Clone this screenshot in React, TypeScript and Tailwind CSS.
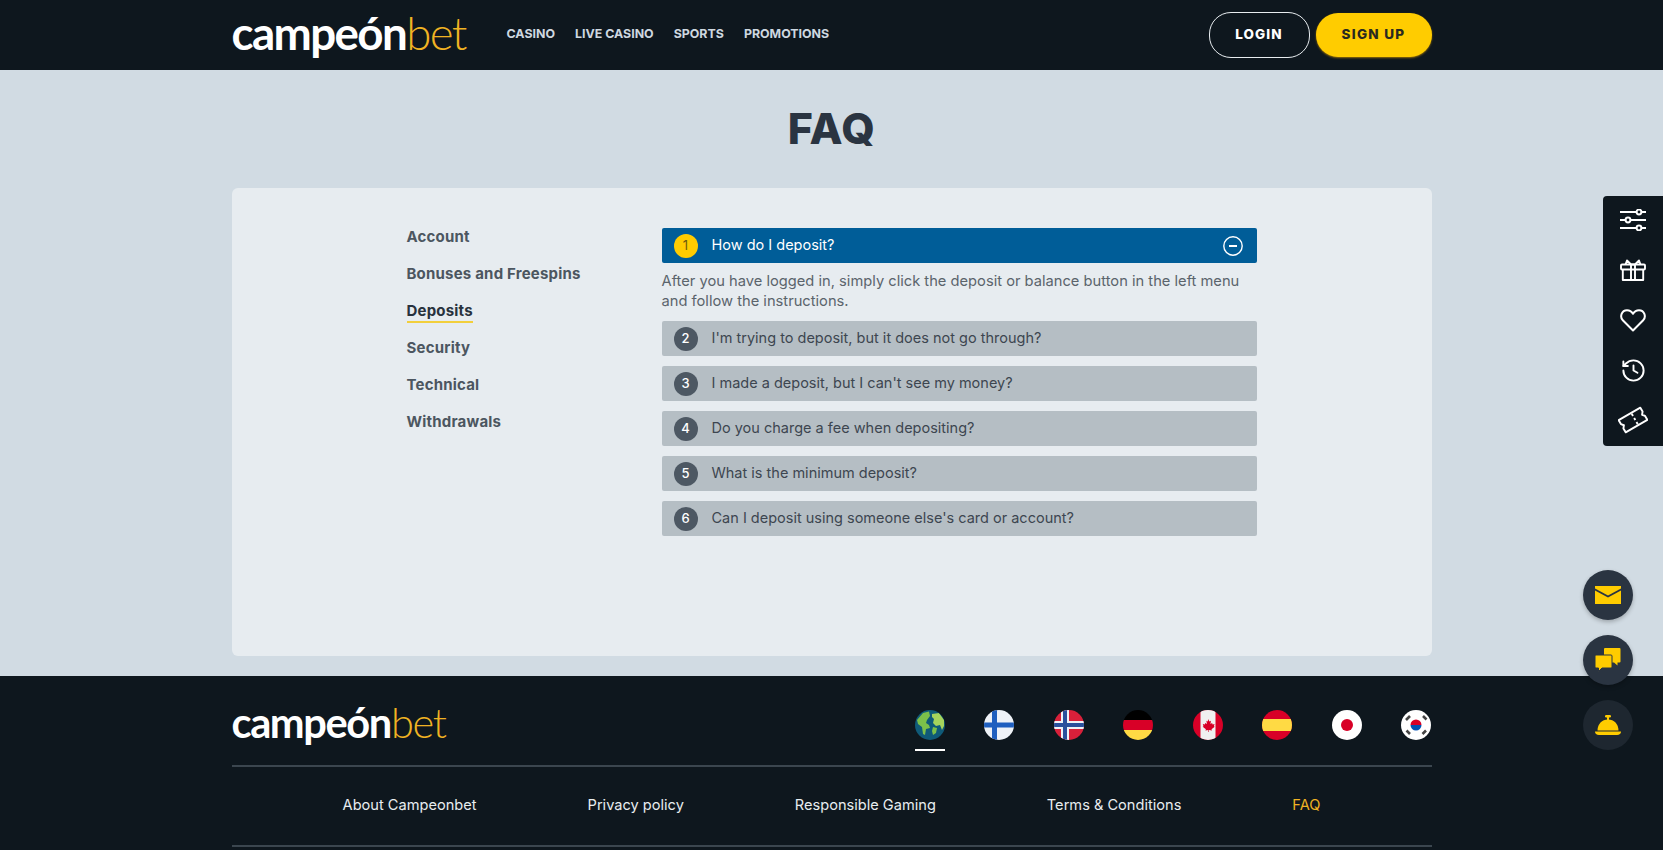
import React from "react";

const font = { fontFamily: '"Inter", "Liberation Sans", sans-serif' };

function Logo({ big }: { big?: boolean }) {
  return (
    <div
      className={
        big
          ? "flex items-baseline text-[45.7px] leading-none tracking-[-1.6px] [font-family:Lato,sans-serif]"
          : "flex items-baseline text-[41.6px] leading-none tracking-[-1.4px] [font-family:Lato,sans-serif]"
      }
    >
      <span className="font-bold text-white">campeón</span>
      <span className="font-light text-[#f0b323]">bet</span>
    </div>
  );
}

const SlidersIcon = () => (
  <svg width="26" height="22" viewBox="0 0 26 22" fill="none" stroke="white" strokeWidth="2">
    <path d="M0 3h16.500M21.500 3H26M0 11h5.500M10.500 11H26M0 19h16.500M21.500 19H26" />
    <circle cx="19" cy="3" r="2.400" />
    <circle cx="8" cy="11" r="2.400" />
    <circle cx="19" cy="19" r="2.400" />
  </svg>
);
const GiftIcon = () => (
  <svg width="26" height="22" viewBox="0 0 26 22" fill="none" stroke="white" strokeWidth="1.9" strokeLinejoin="round">
    <rect x="1" y="5.500" width="24" height="5" rx="1" />
    <path d="M2.800 10.500V21h20.400V10.500M11 5.500V21M15 5.500V21" />
    <path d="M11 5.500 7 1.500l-1.500 4M15 5.500l4-4 1.500 4M11 5.500h4" />
  </svg>
);
const HeartIcon = () => (
  <svg width="26" height="23" viewBox="0 0 26 23" fill="none" stroke="white" strokeWidth="2" strokeLinejoin="round">
    <path d="M13 21.500 2.800 11.200C-.5 7.800 1.600 1.200 7 1.200c2.800 0 4.800 1.600 6 3.600 1.200-2 3.200-3.600 6-3.600 5.400 0 7.500 6.600 4.200 10Z" />
  </svg>
);
const HistoryIcon = () => (
  <svg width="27" height="27" viewBox="0 0 24 24" fill="none" stroke="white" strokeWidth="1.7" strokeLinecap="round" strokeLinejoin="round">
    <path d="M3 12a9 9 0 1 0 9-9 9.750 9.750 0 0 0-6.740 2.740L3 8" />
    <path d="M3 4v4h4" />
    <path d="M12 7.500V12l3.500 2" />
  </svg>
);
const TicketIcon = () => (
  <svg width="30" height="28" viewBox="0 0 30 28" fill="none" stroke="white" strokeWidth="1.9" strokeLinejoin="round">
    <g transform="rotate(-30 15 14)">
      <path d="M2.500 7h25v4.500L25.500 14l2 2.500V21h-25v-4.500l2-2.500-2-2.500Z" />
      <path d="M17 8v2.500M17 12.800v2.400M17 17.500V20" />
    </g>
  </svg>
);

const EnvelopeIcon = () => (
  <svg width="26" height="18" viewBox="0 0 26 18" fill="#ffcc00">
    <path d="M0 0h26v2.500L13 9.500 0 2.500Z" />
    <path d="M0 4.500 13 11.500 26 4.500V18H0Z" />
  </svg>
);
const ChatIcon = () => (
  <svg width="26" height="24" viewBox="0 0 26 24" fill="#ffcc00">
    <path d="M10 0h14.500a1 1 0 0 1 1 1v12.500a1 1 0 0 1-1 1h-2v3l-3.500-3H10a1 1 0 0 1-1-1V1a1 1 0 0 1 1-1Z" />
    <path
      d="M1 7h15a1 1 0 0 1 1 1v11a1 1 0 0 1-1 1H7l-3.500 3.500V20H1a1 1 0 0 1-1-1V8a1 1 0 0 1 1-1Z"
      stroke="#2a3441"
      strokeWidth="1"
    />
  </svg>
);
const BellIcon = () => (
  <svg width="26" height="21" viewBox="0 0 26 21" fill="#ffcc00">
    <rect x="10" y="0" width="6" height="2.500" rx="1.200" />
    <rect x="12" y="2" width="2" height="3" />
    <path d="M2.500 15.500C2.500 9 7 4.500 13 4.500s10.500 4.500 10.500 11Z" />
    <path d="M0 16.500h26c0 2-1.500 3.500-4 3.500H4c-2.500 0-4-1.500-4-3.500Z" />
  </svg>
);

const Minus = () => (
  <svg width="20" height="20" viewBox="0 0 20 20" fill="none" stroke="white" strokeWidth="1.4">
    <circle cx="10" cy="10" r="9.200" />
    <path d="M6 10h8" strokeWidth="2" />
  </svg>
);

const flagClass = "h-[30px] w-[30px] overflow-hidden rounded-full";

const Globe = () => (
  <svg className={flagClass} viewBox="0 0 30 30">
    <rect width="30" height="30" fill="#0f5a78" />
    <path d="M8 3 14 1.500 15 6l-3 4-1 3 3 2 1 3-4 1-1 6-2-1-1-7-4-3-1-4Z" fill="#7cc04a" />
    <path d="M17 4l7-1 5 7v6l-2 4-2-5-4 1-3-3 1-4-2-2Z" fill="#a6d45c" />
    <path d="M18 17l4 1-1 5-3 2-1-4Z" fill="#7cc04a" />
  </svg>
);
const Finland = () => (
  <svg className={flagClass} viewBox="0 0 30 30">
    <rect width="30" height="30" fill="#eef2f7" />
    <rect x="8" width="5" height="30" fill="#1f5fbf" />
    <rect y="12.500" width="30" height="5" fill="#1f5fbf" />
  </svg>
);
const Norway = () => (
  <svg className={flagClass} viewBox="0 0 30 30">
    <rect width="30" height="30" fill="#d8203a" />
    <rect x="7" width="8" height="30" fill="#eef2f7" />
    <rect y="11" width="30" height="8" fill="#eef2f7" />
    <rect x="9" width="4" height="30" fill="#2a4f9c" />
    <rect y="13" width="30" height="4" fill="#2a4f9c" />
  </svg>
);
const Germany = () => (
  <svg className={flagClass} viewBox="0 0 30 30">
    <rect width="30" height="10" fill="#000" />
    <rect y="10" width="30" height="10" fill="#d80027" />
    <rect y="20" width="30" height="10" fill="#ffda44" />
  </svg>
);
const Canada = () => (
  <svg className={flagClass} viewBox="0 0 30 30">
    <rect width="30" height="30" fill="#d80027" />
    <rect x="7.500" width="15" height="30" fill="#f0f0f0" />
    <path d="M15 9l1.500 2.500 1.500-.8-.6 3.300 1.700-1 .5 1.400 2-.3-.7 2.200.8.500-3.200 2.400.5 1.300-3-.4V22h-.6v-1.900l-3 .4.500-1.300-3.200-2.400.8-.5-.7-2.200 2 .3.500-1.400 1.700 1-.6-3.300 1.500.8Z" fill="#d80027" />
  </svg>
);
const Spain = () => (
  <svg className={flagClass} viewBox="0 0 30 30">
    <rect width="30" height="30" fill="#d80027" />
    <rect y="9" width="30" height="12" fill="#ffda44" />
  </svg>
);
const Japan = () => (
  <svg className={flagClass} viewBox="0 0 30 30">
    <rect width="30" height="30" fill="#fff" />
    <circle cx="15" cy="15" r="6" fill="#d80027" />
  </svg>
);
const Korea = () => (
  <svg className={flagClass} viewBox="0 0 30 30">
    <rect width="30" height="30" fill="#fff" />
    <path d="M9.500 15a5.500 5.500 0 0 1 11 0Z" fill="#d80027" />
    <path d="M9.500 15a5.500 5.500 0 0 0 11 0Z" fill="#0052b4" />
    <g stroke="#444" strokeWidth="2.600" strokeLinecap="butt">
      <path d="M5 10l4-4M22 6l3.500 3.500M5.500 20.500 9 24M25 20.500 21.500 24" />
    </g>
  </svg>
);

const sideItems = ["Account", "Bonuses and Freespins", "Deposits", "Security", "Technical", "Withdrawals"];
const questions = [
  "I'm trying to deposit, but it does not go through?",
  "I made a deposit, but I can't see my money?",
  "Do you charge a fee when depositing?",
  "What is the minimum deposit?",
  "Can I deposit using someone else's card or account?",
];
const flags = [Finland, Norway, Germany, Canada, Spain, Japan, Korea];
const footerLinks = ["About Campeonbet", "Privacy policy", "Responsible Gaming", "Terms & Conditions"];

export default function App() {
  return (
    <div style={font} className="relative flex h-[850px] flex-col overflow-hidden bg-[#d1dbe3]">
      <header className="h-[70px] shrink-0 bg-[#0e171e]">
        <div className="mx-auto flex h-full w-[1200px] items-center">
          <div className="mb-[5px] w-[275px]">
            <Logo big />
          </div>
          <nav className="flex gap-[20px] pb-[2px] text-[12.4px] font-bold text-[#ced8e0]">
            <span>CASINO</span>
            <span>LIVE CASINO</span>
            <span>SPORTS</span>
            <span>PROMOTIONS</span>
          </nav>
          <div className="ml-auto flex items-center gap-[6px]">
            <button className="h-[46px] w-[101px] rounded-[22px] border border-[#e8edf0] pb-[1px] text-[13.5px] font-extrabold tracking-[1.1px] text-white">
              LOGIN
            </button>
            <button className="h-[44px] w-[116px] rounded-[22px] bg-[#ffcc00] pb-[1px] text-[13.5px] font-extrabold tracking-[1.3px] text-[#2a2a20] shadow-[0_1px_2px_rgba(180,130,0,0.8)]">
              SIGN UP
            </button>
          </div>
        </div>
      </header>

      <main className="mx-auto w-[1200px] shrink-0 pb-[20px]">
        <h1 className="flex h-[118px] items-center justify-center pb-[2px] text-[43px] font-extrabold tracking-[0.5px] text-[#2a3441]">
          FAQ
        </h1>
        <div className="flex h-[468px] rounded-[6px] bg-[#e7ecf0] pl-[175px]">
          <ul className="w-[255px] pt-[31px] text-[15px] font-bold tracking-[0.2px] text-[#4c5660]">
            {sideItems.map((s) => (
              <li key={s} className="flex h-[37px] items-center">
                {s === "Deposits" ? (
                  <span className="mt-[1px] border-b-2 border-[#f2cf3c] pb-[1px] leading-[19px] text-[#28323d]">{s}</span>
                ) : (
                  s
                )}
              </li>
            ))}
          </ul>
          <div className="w-[595px] pt-[40px]">
            <div className="flex h-[35px] items-center rounded-[2px] bg-[#005d98] pl-[12px] pr-[14px]">
              <span className="flex h-[24px] w-[24px] items-center justify-center rounded-full bg-[#ffcc00] text-[13px] text-[#6b5a10]">
                1
              </span>
              <span className="ml-[14px] pb-[1px] text-[14.5px] text-white">How do I deposit?</span>
              <span className="ml-auto">
                <Minus />
              </span>
            </div>
            <p className="mb-[10px] mt-[9px] text-[14.7px] leading-[19.500px] text-[#5b646c]">
              After you have logged in, simply click the deposit or balance button in the left menu and follow the
              instructions.
            </p>
            <div className="flex flex-col gap-[10px]">
              {questions.map((q, i) => (
                <div key={q} className="flex h-[35px] items-center rounded-[2px] bg-[#b5bec4] pl-[12px]">
                  <span className="flex h-[24px] w-[24px] items-center justify-center rounded-full bg-[#4d5863] text-[13px] font-medium text-white">
                    {i + 2}
                  </span>
                  <span className="ml-[14px] pb-[1px] text-[14.5px] text-[#3d4650]">{q}</span>
                </div>
              ))}
            </div>
          </div>
        </div>
      </main>

      <footer className="flex-1 bg-[#0e171e]">
        <div className="mx-auto w-[1200px]">
          <div className="flex h-[91px] items-start border-b-2 border-[#3b464f]">
            <div className="mt-[26px]">
              <Logo />
            </div>
            <div className="ml-auto mt-[34px] flex w-[517px] justify-between">
              <div className="h-[40px] w-[30px]">
                <Globe />
                <div className="mt-[9px] h-[2px] w-[30px] bg-white" />
              </div>
              {flags.map((F, i) => (
                <F key={i} />
              ))}
            </div>
          </div>
          <div className="flex h-[80px] items-center justify-center gap-[111px] border-b-2 border-[#3b464f] text-[14.6px] text-[#e8edf0]">
            {footerLinks.map((l) => (
              <span key={l}>{l}</span>
            ))}
            <span className="text-[#f0b323]">FAQ</span>
          </div>
        </div>
      </footer>

      <aside className="absolute right-0 top-[196px] flex w-[60px] flex-col rounded-l-[4px] bg-[#0e171e]">
        {[SlidersIcon, GiftIcon, HeartIcon, HistoryIcon, TicketIcon].map((I, i) => (
          <div key={i} className="flex h-[50px] items-center justify-center pb-[2px]">
            <I />
          </div>
        ))}
      </aside>

      <div className="absolute left-[1583px] top-[570px] flex flex-col gap-[15px]">
        <div className="flex h-[50px] w-[50px] items-center justify-center rounded-full bg-[#2a3441] shadow-[0_2px_4px_rgba(0,0,0,0.25)]">
          <EnvelopeIcon />
        </div>
        <div className="flex h-[50px] w-[50px] items-center justify-center rounded-full bg-[#2a3441] shadow-[0_2px_4px_rgba(0,0,0,0.25)]">
          <ChatIcon />
        </div>
        <div className="flex h-[50px] w-[50px] items-center justify-center rounded-full bg-[#1e2730]">
          <BellIcon />
        </div>
      </div>
    </div>
  );
}
